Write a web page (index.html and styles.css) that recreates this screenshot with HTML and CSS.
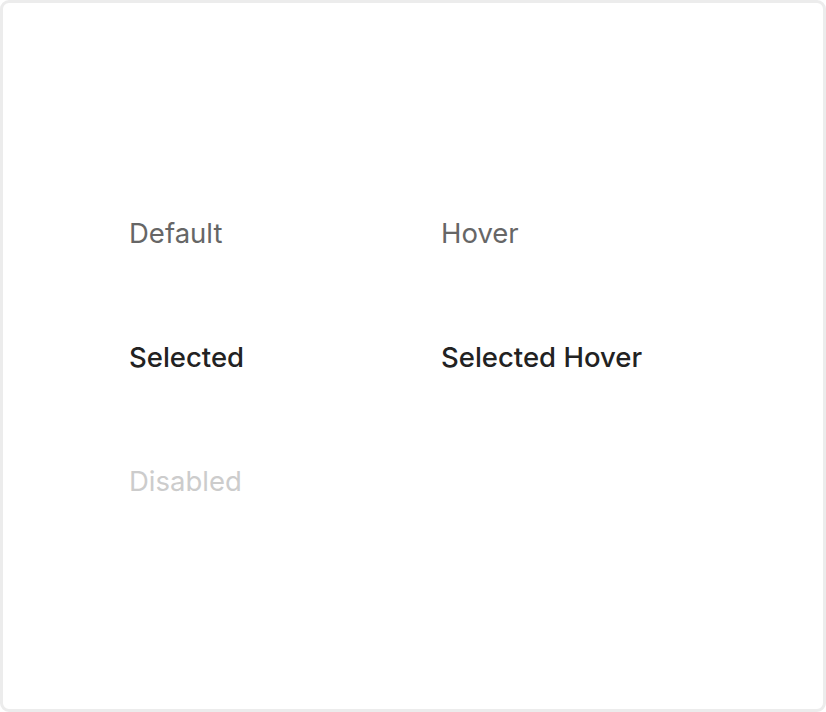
FILE: index.html
```html
<!DOCTYPE html>
<html>
<head>
<meta charset="utf-8">
<link rel="stylesheet" href="styles.css">
</head>
<body>
<div class="card">
  <div class="grid">
    <div class="item default">Default</div>
    <div class="item hover">Hover</div>
    <div class="item selected">Selected</div>
    <div class="item selected">Selected Hover</div>
    <div class="item disabled">Disabled</div>
    <div class="item"></div>
  </div>
</div>
</body>
</html>
```
FILE: styles.css
```css
html, body {
  margin: 0;
  padding: 0;
  background: #ffffff;
}
.card {
  box-sizing: border-box;
  width: 826px;
  height: 712px;
  border: 3px solid #ececec;
  border-radius: 9px;
  background: #ffffff;
  display: flex;
  align-items: center;
  padding-left: 126px;
  padding-top: 2px;
}
.grid {
  display: grid;
  grid-template-columns: 312px 312px;
  grid-auto-rows: 124px;
  align-items: center;
  font-family: Inter, "Noto Sans", sans-serif;
  font-size: 27.5px;
  line-height: 34px;
}
.item {
  white-space: nowrap;
}
.default, .hover {
  color: #666666;
}
.selected {
  color: #222222;
  font-weight: 500;
}
.disabled {
  color: #cccccc;
}
```
